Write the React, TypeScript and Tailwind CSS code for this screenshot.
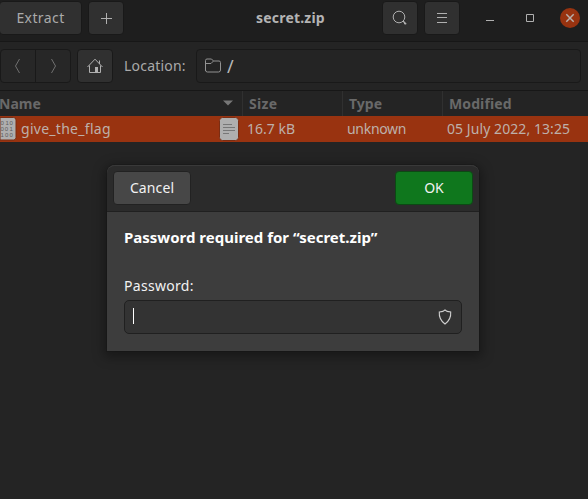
import type { ReactNode } from "react";

const BTN =
  "flex shrink-0 items-center justify-center rounded border border-[#191919] bg-[#303030]";

function Header() {
  return (
    <header className="relative flex h-[42px] items-start border-b border-[#171717] bg-[#1e1e1e] pt-px">
      <button className={`${BTN} -ml-px h-[34px] w-[83px] whitespace-nowrap`}>
        <span className="pb-px tracking-[0.4px]">Extract</span>
      </button>
      <button className={`${BTN} ml-[6px] h-[34px] w-[36px]`}>
        <svg width="16" height="16" fill="none" stroke="#b0b0b0" className="block">
          <path d="M8.5 3v11M3 8.5h11" />
        </svg>
      </button>
      <h1 className="ml-[132px] w-[70px] pt-[6px] leading-[21px] font-bold tracking-[0.2px] whitespace-nowrap text-[#b4b4b4]">
        secret.zip
      </h1>
      <button className={`${BTN} ml-auto h-[34px] w-[36px]`}>
        <svg width="16" height="16" fill="none" stroke="#b0b0b0" className="block">
          <circle cx="7" cy="7" r="5.8" />
          <path d="M11 11l3.2 3.2M12 13.5h2" strokeWidth="1.3" />
        </svg>
      </button>
      <button className={`${BTN} ml-[6px] h-[34px] w-[36px]`}>
        <svg width="16" height="16" fill="none" stroke="#b0b0b0" className="block">
          <path d="M3 3.5h10M3 7.5h10M3 12.5h10" />
        </svg>
      </button>
      <svg width="128" height="34" fill="none" className="block shrink-0">
        <path d="M26 19.5h8" stroke="#b0b0b0" />
        <path d="M66.5 13.5h7v7h-7z" stroke="#b0b0b0" />
        <circle cx="110" cy="17" r="10" fill="#983310" />
        <path d="M106.3 13.3l7.4 7.4m0-7.4l-7.4 7.4" stroke="#b8afab" strokeWidth="1.5" />
      </svg>
    </header>
  );
}

function LocationBar() {
  return (
    <nav className="flex h-[49px] items-start border-b border-[#171717] bg-[#242424] pt-[7px]">
      <div className="flex h-[34px] w-[71px] rounded border border-[#191919] bg-[#272727]">
        <svg width="69" height="32" fill="none" stroke="#707070" className="block">
          <path d="M18.5 9l-4 7 4 7M50.5 9l4 7-4 7" />
          <path d="M34.5 0v32" stroke="#191919" />
        </svg>
      </div>
      <button className={`${BTN} ml-[6px] h-[34px] w-[36px]`}>
        <svg width="18" height="18" fill="none" stroke="#b0b0b0" className="block">
          <path d="M1.5 10L9 2.2l7.5 7.8M3.5 8.5v7h11v-7M13.5 3.5V7" />
          <path d="M9 15.5V10h3v5.5z" fill="#b0b0b0" stroke="none" />
        </svg>
      </button>
      <span className="ml-[11px] w-[72px] pt-[6px] leading-[21px] tracking-[0.2px] whitespace-nowrap">Location:</span>
      <div className="flex h-[34px] w-[385px] items-center rounded border border-[#191919] bg-[#242424] pl-[7px]">
        <svg width="18" height="18" fill="none" stroke="#929292" className="block">
          <path d="M1.5 14V3.5q0-1.5 1.5-1.5h4.5l2 2H15q1.5 0 1.5 1.5V13q0 2-2 2h-11q-2 0-2-2M1.5 6.5H7l2.5-2.5" />
        </svg>
        <span className="ml-[5px] text-[18px] leading-[24px] text-[#b8b8b8]">/</span>
      </div>
    </nav>
  );
}

function HeadCell({ children, className }: { children: ReactNode; className: string }) {
  return (
    <div className={`flex items-center border-[#303030] pb-px font-bold whitespace-nowrap text-[#696969] ${className}`}>
      {children}
    </div>
  );
}

function FileList() {
  return (
    <main className="relative flex-1 bg-[#242424]">
      <div className="grid h-[25px] grid-cols-[243px_100px_100px_1fr]">
        <HeadCell className="justify-between border-r pr-[9px]">
          <span className="-ml-px">Name</span>
          <svg width="10" height="6" fill="#777" className="block">
            <path d="M0 .5h10L5 5.5z" />
          </svg>
        </HeadCell>
        <HeadCell className="border-r pl-[6px] tracking-[0.3px]">Size</HeadCell>
        <HeadCell className="border-r pl-[6px]">Type</HeadCell>
        <HeadCell className="pl-[6px] tracking-[0.1px]">Modified</HeadCell>
      </div>
      <div className="grid h-[26px] grid-cols-[247px_100px_100px_1fr] items-center bg-[#993310] whitespace-nowrap text-[#bdb0aa]">
        <div className="flex items-center">
          <svg width="17" height="24" className="block shrink-0">
            <path d="M0 .5h13.5q2.5 0 2.5 2.5v17.5q0 2.5-2.5 2.5H0z" fill="#afafaf" stroke="#7b2d13" />
            <g fill="#5c5c5c" fontFamily="Liberation Sans, sans-serif" fontSize="6">
              <text x="0.5 5.5 9.5" y="8">010</text>
              <text x="0.5 4.8 9.5" y="14">001</text>
              <text x="0.5 5 9.5" y="20">100</text>
            </g>
          </svg>
          <span className="ml-[4px] pb-[2px] tracking-[0.28px]">give_the_flag</span>
          <svg width="20" height="24" fill="none" className="ml-auto mr-[8px] block">
            <rect x=".5" y=".5" width="19" height="23" rx="3" fill="#afafaf" stroke="#7b2d13" />
            <path d="M4 7.5h9M4 10.5h12M4 13.5h12M4 16.5h6" stroke="#777" />
          </svg>
        </div>
        <span className="pb-[2px]">16.7 kB</span>
        <span className="pb-[2px] tracking-[-0.3px]">unknown</span>
        <span className="pb-[2px] tracking-[0.07px]">05 July 2022, 13:25</span>
      </div>
      <PasswordDialog />
    </main>
  );
}

function PasswordDialog() {
  return (
    <section
      role="dialog"
      className="absolute top-[74px] left-[107px] h-[186px] w-[372px] rounded-t-lg bg-[#3d3d3d] text-[#f2f2f2] shadow-[0_3px_12px_3px_rgba(0,0,0,0.35),0_0_0_1px_#202020]"
    >
      <div className="flex h-[47px] items-start justify-between rounded-t-lg border-t border-b border-t-[#393939] border-b-[#202020] bg-[#2b2b2b] px-[6px] pt-[5px]">
        <button className="h-[34px] w-[78px] rounded border border-[#222] bg-[#474747] pb-[2px] tracking-[0.1px] whitespace-nowrap">
          Cancel
        </button>
        <button className="h-[34px] w-[78px] rounded border border-[#0c4914] bg-[#0f771d] pb-[2px] whitespace-nowrap">
          OK
        </button>
      </div>
      <div className="px-[17px] pt-[15px]">
        <h2 className="text-[15px] leading-[21px] font-bold whitespace-nowrap text-white">
          Password required for “secret.zip”
        </h2>
        <label className="mt-[27px] block leading-[21px] tracking-[0.3px] whitespace-nowrap">Password:</label>
        <div className="mt-[4px] flex h-[34px] w-[338px] items-center justify-between rounded-[5px] border border-[#202020] bg-[#333] pr-[9px] pl-[8px]">
          <span className="mb-[2px] h-[16px] w-px bg-white" />
          <svg width="14" height="16" fill="none" stroke="#d0d0d0" strokeWidth="1.1" className="block">
            <path d="M1.3 3L4.8 2.4 7 1l2.2 1.4 3.5.6q.6 7.5-5.7 12-6.3-4.5-5.7-12z" />
          </svg>
        </div>
      </div>
    </section>
  );
}

export default function App() {
  return (
    <div className="flex h-[499px] w-[588px] flex-col overflow-hidden bg-[#242424] font-['Noto_Sans',sans-serif] text-[14px] text-[#aaa]">
      <Header />
      <LocationBar />
      <FileList />
    </div>
  );
}
